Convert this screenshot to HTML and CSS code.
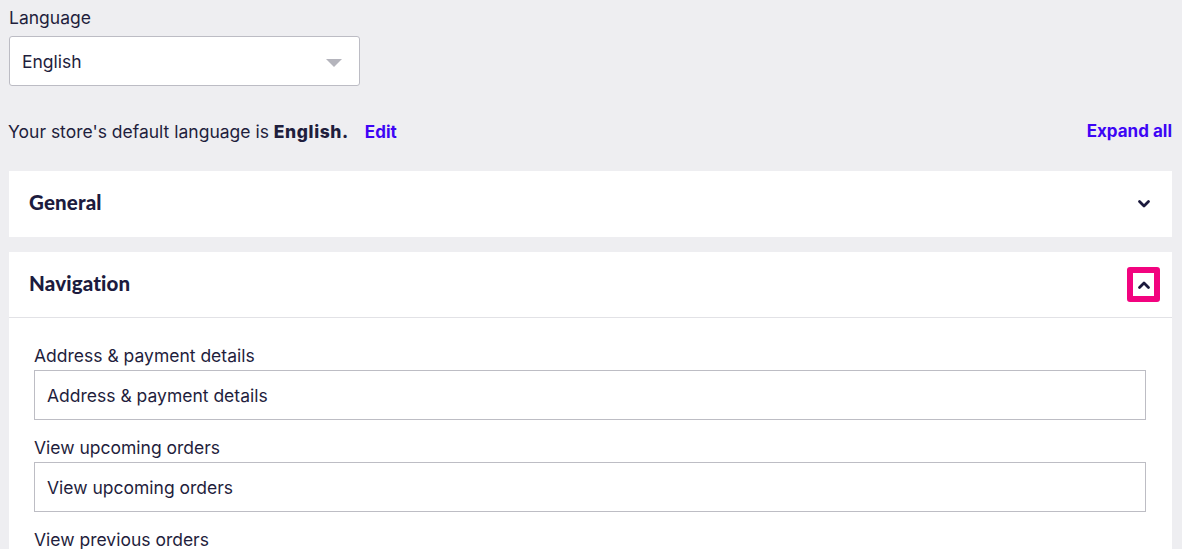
FILE: index.html
```html
<!DOCTYPE html>
<html lang="en">
<head>
<meta charset="utf-8">
<title>Language settings</title>
<link rel="stylesheet" href="styles.css">
</head>
<body>
<div class="page">
  <div class="lang-field">
    <label class="field-label top-label">Language</label>
    <div class="select">
      <span>English</span>
      <span class="caret"></span>
    </div>
  </div>

  <div class="default-row">
    <p class="default-text">Your store's default language is <strong>English.</strong><a class="link edit" href="#">Edit</a></p>
    <a class="link" href="#">Expand all</a>
  </div>

  <section class="panel">
    <div class="panel-head">
      <h2>General</h2>
      <button class="toggle" aria-label="Expand">
        <svg width="14" height="10" viewBox="0 0 14 10"><path d="M2.5 2.5 L7 7 L11.5 2.5" fill="none" stroke="#1b1a3c" stroke-width="2.8" stroke-linecap="round" stroke-linejoin="round"/></svg>
      </button>
    </div>
  </section>

  <section class="panel open">
    <div class="panel-head">
      <h2>Navigation</h2>
      <button class="toggle focused" aria-label="Collapse">
        <svg width="14" height="10" viewBox="0 0 14 10"><path d="M2.5 7.5 L7 3 L11.5 7.5" fill="none" stroke="#1b1a3c" stroke-width="2.8" stroke-linecap="round" stroke-linejoin="round"/></svg>
      </button>
    </div>
    <div class="panel-body">
      <div class="field">
        <label class="field-label">Address &amp; payment details</label>
        <div class="input">Address &amp; payment details</div>
      </div>
      <div class="field">
        <label class="field-label">View upcoming orders</label>
        <div class="input">View upcoming orders</div>
      </div>
      <div class="field">
        <label class="field-label">View previous orders</label>
        <div class="input">View previous orders</div>
      </div>
    </div>
  </section>
</div>
</body>
</html>
```

FILE: styles.css
```css
* { box-sizing: border-box; }
html, body { margin: 0; padding: 0; }
body {
  background: #eeeef1;
  color: #1f1e3d;
  font-family: "Inter", "Liberation Sans", Arial, sans-serif;
  font-size: 17.5px;
  overflow: hidden;
}
.page {
  padding: 7px 10px 0 9px;
}
.field-label {
  display: block;
  font-size: 17.5px;
  line-height: 22px;
  margin-bottom: 3px;
}
.top-label { margin-bottom: 7px; }
.select {
  width: 351px;
  height: 50px;
  background: #fff;
  border: 1px solid #bcbcc4;
  border-radius: 3px;
  display: flex;
  align-items: center;
  justify-content: space-between;
  padding: 0 17px 0 12px;
}
.caret {
  width: 0;
  height: 0;
  border-left: 8px solid transparent;
  border-right: 8px solid transparent;
  border-top: 8px solid #b4b4bc;
  margin-top: 3px;
}
.default-row {
  display: flex;
  justify-content: space-between;
  align-items: center;
  margin-top: 34px;
  height: 22px;
}
.default-text { margin: 0 0 0 -1px; }
.default-text strong {
  font-weight: 800;
  letter-spacing: 0.6px;
}
.link {
  color: #3d05f5;
  font-size: 17px;
  font-weight: 700;
  text-decoration: none;
}
.edit { margin-left: 16px; }
.panel {
  background: #fff;
  margin-top: 29px;
}
.panel + .panel { margin-top: 15px; }
.panel-head {
  height: 66px;
  display: flex;
  align-items: center;
  justify-content: space-between;
  padding: 0 12px 0 20px;
}
.open .panel-head {
  border-bottom: 1px solid #e2e2e6;
}
.panel-head h2 {
  margin: -4px 0 0;
  font-family: "Lato", "Liberation Sans", sans-serif;
  font-weight: 900;
  font-size: 20.5px;
  letter-spacing: 0.15px;
  color: #1c1b3e;
}
.toggle {
  width: 33px;
  height: 35px;
  border: 6px solid transparent;
  border-radius: 3px;
  background: #fff;
  display: flex;
  align-items: center;
  justify-content: center;
  padding: 0;
}
.toggle.focused { border-color: #f2037f; }
.panel-body {
  padding: 27px 26px 0 25px;
}
.field { margin-bottom: 17px; }
.input {
  height: 50px;
  border: 1px solid #bdbdc4;
  display: flex;
  align-items: center;
  padding: 0 12px;
  background: #fff;
}
```
